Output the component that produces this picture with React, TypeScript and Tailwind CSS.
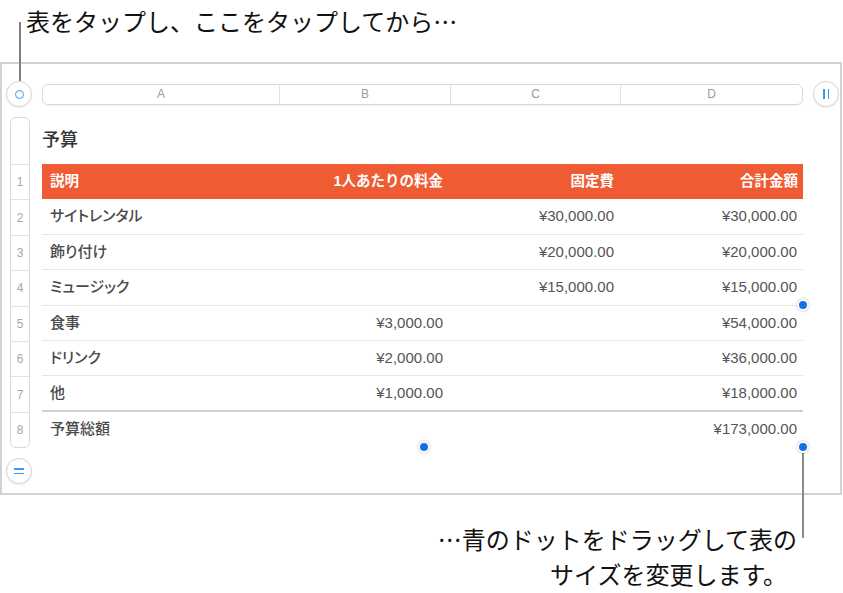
const rows = [
  { n: 2, label: 'サイトレンタル', b: '', c: '¥30,000.00', d: '¥30,000.00' },
  { n: 3, label: '飾り付け', b: '', c: '¥20,000.00', d: '¥20,000.00' },
  { n: 4, label: 'ミュージック', b: '', c: '¥15,000.00', d: '¥15,000.00' },
  { n: 5, label: '食事', b: '¥3,000.00', c: '', d: '¥54,000.00' },
  { n: 6, label: 'ドリンク', b: '¥2,000.00', c: '', d: '¥36,000.00' },
  { n: 7, label: '他', b: '¥1,000.00', c: '', d: '¥18,000.00' },
];

function Dot({ x, y }: { x: number; y: number }) {
  return (
    <div
      className="absolute h-[12px] w-[12px] -translate-x-1/2 -translate-y-1/2 rounded-full border-2 border-white bg-[#1470e6] shadow-[0_0_2px_rgba(0,0,0,0.35)]"
      style={{ left: x, top: y }}
    />
  );
}

function RoundButton({ children }: { children: React.ReactNode }) {
  return (
    <div className="flex h-[26px] w-[26px] items-center justify-center rounded-full border border-[#d5d5d5] bg-white shadow-[0_1px_2px_rgba(0,0,0,0.08)]">
      {children}
    </div>
  );
}

export default function App() {
  return (
    <div className="relative h-[593px] w-[843px] overflow-hidden bg-white font-['Noto_Sans_CJK_JP',sans-serif] text-[#111]">
      {/* top callout */}
      <div className="h-[62px] pl-[26px] pt-[8px] text-[24px] leading-[26px]">表をタップし、ここをタップしてから…</div>

      {/* table frame */}
      <div className="w-[842px] border-2 border-[#d2d2d2] font-['Liberation_Sans','Noto_Sans_CJK_JP',sans-serif]">
        <div className="mt-[17px] flex h-[26px] items-center">
          <div className="ml-[4px] mr-[10px]">
            <RoundButton>
              <div className="h-[9px] w-[9px] rounded-full border-[1.5px] border-[#3d98f2]" />
            </RoundButton>
          </div>
          <div className="flex h-[21px] w-[761px] overflow-hidden rounded-[6px] border border-[#d9d9d9] text-[12px] text-[#9a9a9a] shadow-[0_1px_1px_rgba(0,0,0,0.05)]">
            <div className="flex w-[237px] items-center justify-center border-r border-[#e2e2e2]">A</div>
            <div className="flex w-[171px] items-center justify-center border-r border-[#e2e2e2]">B</div>
            <div className="flex w-[170px] items-center justify-center border-r border-[#e2e2e2]">C</div>
            <div className="flex flex-1 items-center justify-center">D</div>
          </div>
          <div className="ml-[10px]">
            <RoundButton>
              <div className="flex gap-[3px]">
                <div className="h-[10px] w-[1.5px] bg-[#3d98f2]" />
                <div className="h-[10px] w-[1.5px] bg-[#3d98f2]" />
              </div>
            </RoundButton>
          </div>
        </div>

        <div className="mt-[10px] flex">
          {/* row headers */}
          <div className="ml-[8px] mr-[12px] flex w-[20px] flex-col rounded-[6px] border border-[#d9d9d9] text-[12px] text-[#a8a8a8]">
            <div className="h-[46px]" />
            {[1, 2, 3, 4, 5, 6, 7, 8].map((n) => (
              <div key={n} className="flex h-[35.4px] items-center justify-center border-t border-[#e2e2e2]">
                {n}
              </div>
            ))}
          </div>

          {/* table */}
          <div className="w-[761px]">
            <div className="flex h-[47px] items-center text-[18px] font-medium text-[#333]">予算</div>
            <div className="flex h-[35.4px] items-center bg-[#ef5b33] text-[14.5px] font-bold text-white">
              <div className="w-[237px] pl-[8px]">説明</div>
              <div className="w-[171px] pr-[7px] text-right">1人あたりの料金</div>
              <div className="w-[170px] pr-[6px] text-right">固定費</div>
              <div className="flex-1 pr-[5px] text-right">合計金額</div>
            </div>
            {rows.map((r) => (
              <div
                key={r.n}
                className={`flex h-[35.4px] items-center text-[15px] text-[#555] ${r.n === 7 ? 'border-b-2 border-[#d0d0d0]' : 'border-b border-[#e6e6e6]'}`}
              >
                <div className="w-[237px] pl-[8px] font-medium text-[#4a4a4a] [font-feature-settings:'palt']">{r.label}</div>
                <div className="w-[171px] pr-[7px] text-right">{r.b}</div>
                <div className="w-[170px] pr-[6px] text-right">{r.c}</div>
                <div className="flex-1 pr-[6px] text-right">{r.d}</div>
              </div>
            ))}
            <div className="flex h-[35.4px] items-center text-[15px] text-[#555]">
              <div className="w-[237px] pl-[8px] font-medium text-[#4a4a4a]">予算総額</div>
              <div className="w-[171px]" />
              <div className="w-[170px]" />
              <div className="flex-1 pr-[6px] text-right">¥173,000.00</div>
            </div>
          </div>
        </div>

        <div className="ml-[4px] mt-[10px] mb-[9px]">
          <RoundButton>
            <div className="flex flex-col gap-[3px]">
              <div className="h-[1.5px] w-[10px] bg-[#3d98f2]" />
              <div className="h-[1.5px] w-[10px] bg-[#3d98f2]" />
            </div>
          </RoundButton>
        </div>
      </div>

      {/* bottom callout */}
      <div className="mt-[26px] flex flex-col items-end text-[24px] leading-[35px]">
        <div className="mr-[46px]">…青のドットをドラッグして表の</div>
        <div className="mr-[56px]">サイズを変更します。</div>
      </div>

      {/* leader lines */}
      <div className="absolute left-[19px] top-[22px] h-[59px] w-[2px] bg-[#808080]" />
      <div className="absolute left-[802px] top-[450px] h-[88px] w-[2px] bg-[#8a8a8a]" />

      <Dot x={803} y={305} />
      <Dot x={424} y={447} />
      <Dot x={803} y={447} />
    </div>
  );
}
